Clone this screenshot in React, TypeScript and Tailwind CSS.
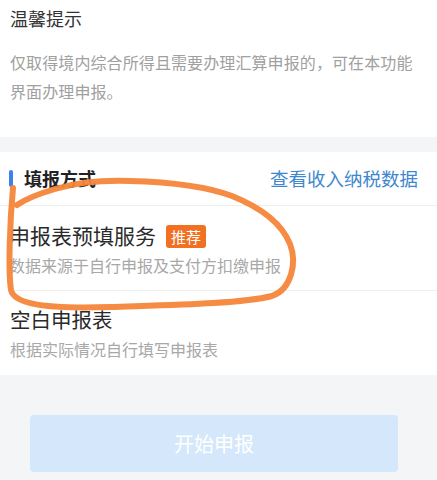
import React from "react";

export default function App() {
  const font = { fontFamily: '"Noto Sans CJK SC", "Noto Sans", sans-serif' };
  return (
    <div className="relative w-[437px] h-[480px] overflow-hidden bg-[#f4f5f7]" style={font}>
      <div className="bg-white h-[137px] px-[10px] pt-[6px]">
        <div className="text-[18px] leading-[24px] text-[#333333]">温馨提示</div>
        <div className="mt-[18px] w-[410px] text-[16px] leading-[29px] text-[#a0a0a0] tracking-[0.1px]">
          仅取得境内综合所得且需要办理汇算申报的，可在本功能
          <br />
          界面办理申报。
        </div>
      </div>
      <div className="mt-[15px] bg-white">
        <div className="h-[54px] flex items-center justify-between pl-[9px] pr-[19px] border-b border-[#eeeeee]">
          <div className="flex items-center">
            <div className="w-[4px] h-[17px] rounded-full bg-[#3b82f0]" />
            <div className="ml-[11px] text-[18px] font-bold text-[#222222]">填报方式</div>
          </div>
          <div className="text-[18.5px] text-[#3f88cf]">查看收入纳税数据</div>
        </div>
        <div className="ml-[8px] h-[85px] border-b border-[#eeeeee] pl-[1px] pt-[15px]">
          <div className="flex items-center h-[30px]">
            <span className="text-[21px] text-[#2a2a2a]">申报表预填服务</span>
            <span className="ml-[10px] h-[23px] px-[5px] rounded-[3px] bg-[#f27022] text-white text-[15px] leading-[23px]">推荐</span>
          </div>
          <div className="text-[16px] leading-[28px] text-[#a8a8a8]">数据来源于自行申报及支付方扣缴申报</div>
        </div>
        <div className="h-[84px] pl-[10px] pt-[13px]">
          <div className="text-[20.5px] leading-[30px] text-[#2a2a2a]">空白申报表</div>
          <div className="text-[16px] leading-[30px] text-[#a8a8a8]">根据实际情况自行填写申报表</div>
        </div>
      </div>
      <div className="px-[30px] pt-[40px] w-[428px]">
        <div className="h-[57px] rounded-[4px] bg-[#d4e7fb] flex items-center justify-center text-white text-[20px]">
          开始申报
        </div>
      </div>
      <svg className="absolute left-0 top-0 pointer-events-none" width="437" height="480" viewBox="0 0 437 480">
        <path
          d="M13,188 C10,220 8,270 11,290 C14,305 50,309 110,307 C170,305 240,304 272,296 C292,289 297,262 290,244 C282,224 262,208 232,196 C205,186 170,182 130,181 C100,180 75,183 55,189 C38,194 24,200 17,205"
          fill="none"
          stroke="#f5853a"
          strokeWidth="6"
          strokeLinecap="round"
          strokeLinejoin="round"
          opacity="0.95"
        />
      </svg>
    </div>
  );
}
